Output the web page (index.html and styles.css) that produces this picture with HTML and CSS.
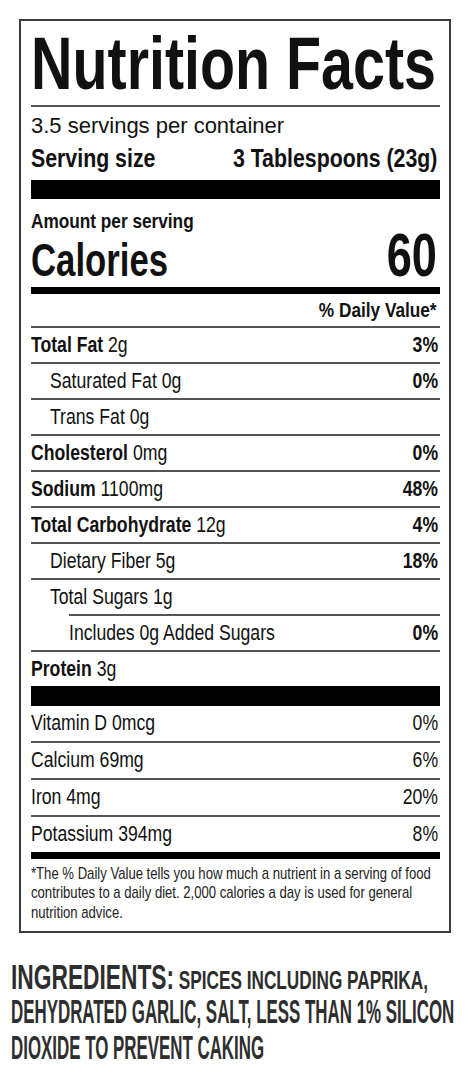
FILE: index.html
```html
<!DOCTYPE html>
<html lang="en">
<head>
    <meta charset="UTF-8">
    <meta name="viewport" content="width=device-width, initial-scale=1.0">
    <title>Nutrition Facts</title>
    <link rel="stylesheet" href="styles.css">
</head>
<body>
    <div class="label">
        <h1 class="title"><span>Nutrition Facts</span></h1>
        <div class="servings">3.5 servings per container</div>
        <div class="serving-size">
            <span class="name">Serving size</span>
            <span class="pct">3 Tablespoons (23g)</span>
        </div>
        <div class="bar bar-big"></div>

        <div class="amount"><span class="name">Amount per serving</span></div>
        <div class="calories">
            <span class="calories-label">Calories</span>
            <span class="calories-value">60</span>
        </div>
        <div class="bar bar-mid"></div>

        <div class="dv-head"><span class="pct">% Daily Value*</span></div>

        <div class="row"><span class="name"><b>Total Fat</b> 2g</span><b class="pct">3%</b></div>
        <div class="row sub"><span class="name">Saturated Fat 0g</span><b class="pct">0%</b></div>
        <div class="row sub"><span class="name">Trans Fat 0g</span></div>
        <div class="row"><span class="name"><b>Cholesterol</b> 0mg</span><b class="pct">0%</b></div>
        <div class="row"><span class="name"><b>Sodium</b> 1100mg</span><b class="pct">48%</b></div>
        <div class="row"><span class="name"><b>Total Carbohydrate</b> 12g</span><b class="pct">4%</b></div>
        <div class="row sub"><span class="name">Dietary Fiber 5g</span><b class="pct">18%</b></div>
        <div class="row sub"><span class="name">Total Sugars 1g</span></div>
        <div class="row subsub"><span class="name">Includes 0g Added Sugars</span><b class="pct">0%</b></div>
        <div class="row"><span class="name"><b>Protein</b> 3g</span></div>
        <div class="bar bar-big bar-protein"></div>

        <div class="vitamins">
            <div class="row"><span class="name">Vitamin D 0mcg</span><span class="pct">0%</span></div>
            <div class="row"><span class="name">Calcium 69mg</span><span class="pct">6%</span></div>
            <div class="row"><span class="name">Iron 4mg</span><span class="pct">20%</span></div>
            <div class="row"><span class="name">Potassium 394mg</span><span class="pct">8%</span></div>
        </div>
        <div class="bar bar-mid"></div>

        <div class="footnote">
            <p>*The % Daily Value tells you how much a nutrient in a serving of food<br>contributes to a daily diet. 2,000 calories a day is used for general<br>nutrition advice.</p>
        </div>
    </div>

    <div class="ingredients">
        <div class="line line-first"><span><span class="ing-head">INGREDIENTS:</span> SPICES INCLUDING PAPRIKA,</span></div>
        <div class="line"><span>DEHYDRATED GARLIC, SALT, LESS THAN 1% SILICON</span></div>
        <div class="line"><span>DIOXIDE TO PREVENT CAKING</span></div>
    </div>
</body>
</html>
```

FILE: styles.css
```css
body {
    margin: 0;
    background-color: #fff;
    color: #111;
    font-family: "Liberation Sans", Arial, sans-serif;
}

/* the label uses a condensed face: squeeze Liberation Sans */
.name {
    display: inline-block;
    transform-origin: left center;
    transform: scaleX(0.82);
}

.pct {
    display: inline-block;
    transform-origin: right center;
    transform: scaleX(0.82);
}

.label {
    box-sizing: border-box;
    width: 432px;
    margin: 19px 0 0 19px;
    padding: 6px 9px 8.5px 10px;
    border: 2px solid #3c3c3c;
}

.title {
    display: flex;
    height: 74px;
    margin: 0;
    padding-bottom: 4px;
    border-bottom: 2px solid #555;
    font-size: 57px;
    line-height: 57px;
    font-weight: bold;
    white-space: nowrap;
}

.title span {
    transform-origin: left top;
    transform: scale(1.007, 1.298);
}

.servings {
    margin-top: 6px;
    font-size: 22px;
    line-height: 26px;
}

.serving-size {
    display: flex;
    justify-content: space-between;
    margin-top: 6px;
    padding-right: 3px;
    font-size: 26px;
    line-height: 26px;
    font-weight: bold;
    white-space: nowrap;
}

.bar {
    background-color: #000;
}

.bar-big {
    height: 19px;
    margin-top: 9px;
}

.bar-protein {
    height: 20px;
    margin-top: 0;
}

.bar-mid {
    height: 7px;
}

.amount {
    padding-top: 10px;
    font-size: 21px;
    line-height: 24px;
    font-weight: bold;
    white-space: nowrap;
}

.calories {
    display: flex;
    justify-content: space-between;
    align-items: baseline;
    height: 44px;
    font-weight: bold;
    line-height: 44px;
}

.calories + .bar-mid {
    margin-top: 10px;
}

.calories-label {
    font-size: 46px;
    transform-origin: left center;
    transform: scaleX(0.755);
}

.calories-value {
    font-size: 61px;
    margin-right: 3px;
    transform-origin: right center;
    transform: scaleX(0.74);
}

.dv-head {
    text-align: right;
    padding-right: 3px;
    font-size: 21px;
    line-height: 32px;
    font-weight: bold;
    white-space: nowrap;
}

.row {
    display: flex;
    justify-content: space-between;
    height: 34px;
    padding-right: 2px;
    border-top: 2px solid #555;
    font-size: 21.5px;
    line-height: 34px;
    white-space: nowrap;
}

.row.sub {
    padding-left: 19px;
}

.row.subsub {
    margin-left: 38px;
}

.vitamins .row {
    height: 35px;
    line-height: 35px;
}

.vitamins .row:first-child {
    border-top: none;
}

.footnote {
    height: 58.5px;
    padding-top: 5px;
}

.footnote p {
    margin: 0;
    font-size: 13.12px;
    line-height: 16px;
    color: #222;
    white-space: nowrap;
    transform-origin: left top;
    transform: scaleY(1.219);
}

.ingredients {
    margin-top: 27px;
    padding-left: 11px;
    color: #2e2e2e;
    font-weight: bold;
}

.line {
    display: flex;
    height: 35.5px;
    font-size: 16.9px;
    line-height: 18.18px;
    white-space: nowrap;
}

.line > span {
    transform-origin: left top;
    transform: scaleY(1.953);
}

.line-first {
    height: 36px;
    font-size: 17.22px;
    line-height: 23.4px;
}

.line-first > span {
    height: 23.4px;
    transform: scaleY(1.538);
}

.ing-head {
    font-size: 22.75px;
}
```
